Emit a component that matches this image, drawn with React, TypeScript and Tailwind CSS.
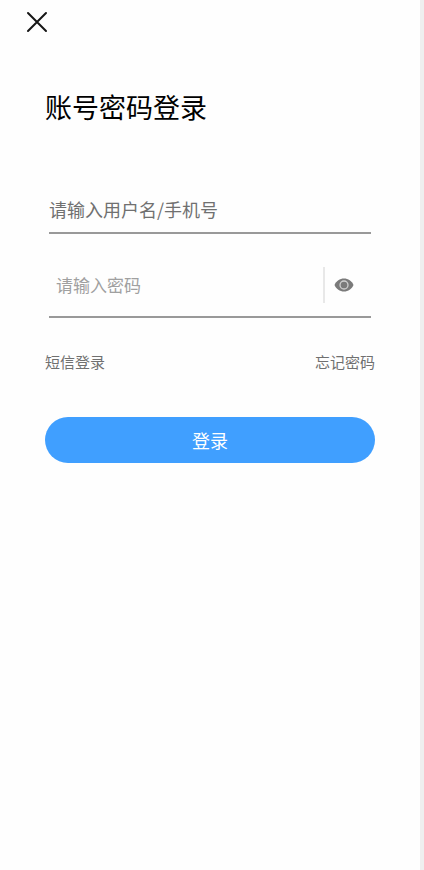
import { useState } from 'react';
import type { FormEvent } from 'react';

function CloseIcon() {
  return (
    <svg viewBox="0 0 22 22" className="size-[22px]" fill="none" stroke="#161616" strokeWidth="2" strokeLinecap="round">
      <path d="M2 2l18 18M20 2L2 20" />
    </svg>
  );
}

function EyeIcon() {
  return (
    <svg viewBox="0 0 20 14" className="h-3.5 w-5">
      <path d="M10 .5C5.800 .5 2.200 3 .500 7c1.700 4 5.300 6.500 9.500 6.500S17.800 11 19.500 7C17.800 3 14.200 .5 10 .5z" fill="#7a7a7a" />
      <circle cx="10" cy="7" r="4" fill="none" stroke="#d0d0d0" strokeWidth="1.300" />
    </svg>
  );
}

export default function App() {
  const [account, setAccount] = useState('');
  const [password, setPassword] = useState('');
  const [visible, setVisible] = useState(false);

  const handleSubmit = (e: FormEvent) => {
    e.preventDefault();
  };

  return (
    <div className="min-h-screen border-r-4 border-[#efefef] bg-[#fefefe] font-['Noto_Sans_CJK_SC',sans-serif]">
      <header className="flex px-[26px] pt-[11px]">
        <button type="button" aria-label="关闭">
          <CloseIcon />
        </button>
      </header>

      <main className="px-[45px] pt-14">
        <h1 className="text-[27px] leading-9 text-black">账号密码登录</h1>

        <form onSubmit={handleSubmit} className="pt-15">
          <div className="mx-1 flex h-[49px] items-center border-b-2 border-[#999]">
            <input
              type="text"
              aria-label="用户名/手机号"
              placeholder="请输入用户名/手机号"
              value={account}
              onChange={(e) => setAccount(e.target.value)}
              className="w-full text-lg text-[#333] outline-none placeholder:text-[#707070]"
            />
          </div>

          <div className="mx-1 mt-5 flex h-16 items-center border-b-2 border-[#999]">
            <input
              type={visible ? 'text' : 'password'}
              aria-label="密码"
              placeholder="请输入密码"
              value={password}
              onChange={(e) => setPassword(e.target.value)}
              className="min-w-0 flex-1 pl-[7px] text-[17px] text-[#333] outline-none placeholder:text-[#a0a0a0]"
            />
            <button
              type="button"
              aria-label="显示密码"
              onClick={() => setVisible(!visible)}
              className="flex h-9 w-12 items-center border-l-2 border-[#e8e8e8] pl-[9px]"
            >
              <EyeIcon />
            </button>
          </div>

          <div className="mt-8 flex justify-between text-[15px] leading-6 text-[#707070]">
            <a href="#sms">短信登录</a>
            <a href="#forgot">忘记密码</a>
          </div>

          <button type="submit" className="mt-[43px] h-[46px] w-full rounded-full bg-[#409fff] text-lg text-white">
            登录
          </button>
        </form>
      </main>
    </div>
  );
}
